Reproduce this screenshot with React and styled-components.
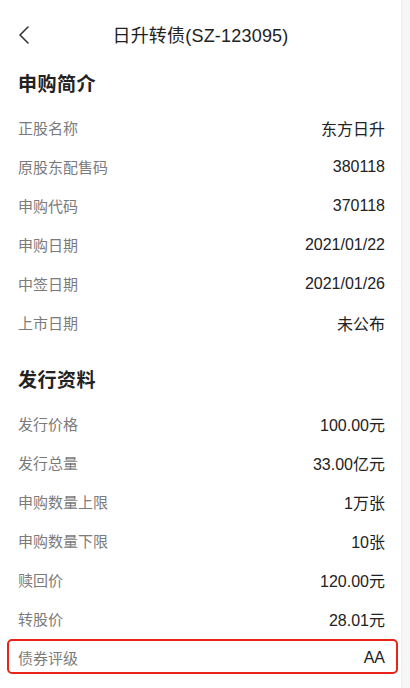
import React from 'react';
import styled, { createGlobalStyle } from 'styled-components';

const GlobalStyle = createGlobalStyle`
  html, body {
    margin: 0;
    padding: 0;
    background: #f6f6f6;
  }
  body {
    font-family: "Liberation Sans", "Noto Sans CJK SC", sans-serif;
    -webkit-font-smoothing: antialiased;
  }
`;

const Page = styled.div`
  width: 401px;
  height: 688px;
  background: #fff;
  border-right: 1px solid #ececec;
  overflow: hidden;
`;

const Header = styled.header`
  height: 68px;
  display: flex;
  align-items: center;
  justify-content: center;
  position: relative;
`;

const BackBtn = styled.button`
  position: absolute;
  left: 14px;
  top: 25px;
  width: 20px;
  height: 20px;
  padding: 0;
  border: none;
  background: none;
  display: flex;
  align-items: center;
  justify-content: center;
  cursor: pointer;
`;

const Title = styled.h1`
  margin: 0;
  font-size: 18px;
  font-weight: 400;
  color: #222;
  letter-spacing: 0.2px;
`;

const Section = styled.section`
  padding-top: ${(p) => (p.first ? '5px' : '27px')};
`;

const SectionTitle = styled.h2`
  margin: 0 0 11px;
  padding: 0 18px;
  height: 24px;
  line-height: 24px;
  font-size: 19px;
  font-weight: 700;
  color: #222;
  letter-spacing: 0.5px;
`;

const Row = styled.div`
  position: relative;
  height: 39px;
  padding: 0 16px 0 18px;
  display: flex;
  align-items: center;
  justify-content: space-between;

  ${(p) =>
    p.highlight &&
    `
    &::after {
      content: '';
      position: absolute;
      left: 7px;
      right: 3px;
      top: 1px;
      bottom: 3px;
      border: 2.5px solid #e8241a;
      border-radius: 5px;
    }
  `}
`;

const Label = styled.span`
  font-size: 15px;
  color: #7b7b7b;
`;

const Value = styled.span`
  font-size: 16px;
  color: #222;
`;

const subscribe = [
  ['正股名称', '东方日升'],
  ['原股东配售码', '380118'],
  ['申购代码', '370118'],
  ['申购日期', '2021/01/22'],
  ['中签日期', '2021/01/26'],
  ['上市日期', '未公布'],
];

const issue = [
  ['发行价格', '100.00元'],
  ['发行总量', '33.00亿元'],
  ['申购数量上限', '1万张'],
  ['申购数量下限', '10张'],
  ['赎回价', '120.00元'],
  ['转股价', '28.01元'],
  ['债券评级', 'AA', true],
];

const App = () => {
  return (
    <>
      <GlobalStyle />
      <Page>
        <Header>
          <BackBtn aria-label="返回">
            <svg width="14" height="18" viewBox="0 0 14 18" fill="none">
              <path d="M11 1L3 9L11 17" stroke="#333" strokeWidth="1.6" strokeLinecap="round" strokeLinejoin="round" />
            </svg>
          </BackBtn>
          <Title>日升转债(SZ-123095)</Title>
        </Header>

        <Section first>
          <SectionTitle>申购简介</SectionTitle>
          {subscribe.map(([k, v]) => (
            <Row key={k}>
              <Label>{k}</Label>
              <Value>{v}</Value>
            </Row>
          ))}
        </Section>

        <Section>
          <SectionTitle>发行资料</SectionTitle>
          {issue.map(([k, v, hl]) => (
            <Row key={k} highlight={hl}>
              <Label>{k}</Label>
              <Value>{v}</Value>
            </Row>
          ))}
        </Section>
      </Page>
    </>
  );
};

export default App;
